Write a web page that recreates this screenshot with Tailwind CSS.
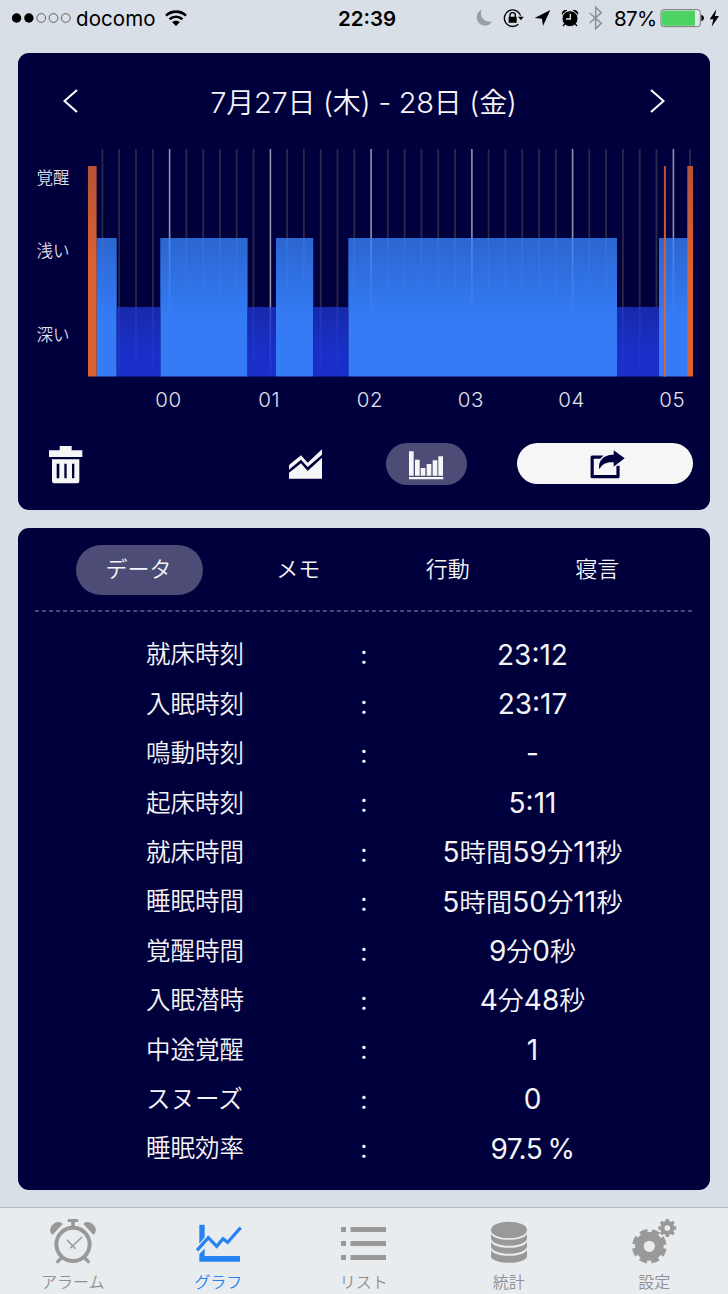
<!DOCTYPE html>
<html lang="ja">
<head>
<meta charset="utf-8">
<title>グラフ</title>
<script src="https://cdn.jsdelivr.net/npm/@tailwindcss/browser@4"></script>
</head>
<body class="w-[728px] h-[1294px] overflow-hidden bg-[#d9dfe6] font-['Inter','Noto_Sans_CJK_JP',sans-serif] flex flex-col">

<!-- Status bar -->
<header class="relative h-[53px] shrink-0 flex items-start text-black">
  <div class="flex items-center h-[37px] pl-[12px]">
    <svg class="-mt-[1px] w-[60px] h-[10px]" viewBox="0 0 60 10"><g fill="#000"><circle cx="4.6" cy="5" r="4.7"/><circle cx="16.9" cy="5" r="4.7"/></g><g fill="none" stroke="#444" stroke-width=".8"><circle cx="29.2" cy="5" r="4.4"/><circle cx="41.5" cy="5" r="4.4"/><circle cx="53.8" cy="5" r="4.4"/></g></svg>
    <span class="ml-[4px] mt-[2px] w-[80px] text-[20.5px] tracking-[0.1px] whitespace-nowrap">docomo</span>
    <svg class="ml-[9px] -mt-[1px] w-[22px] h-[17px]" viewBox="0 0 22 17"><g fill="none" stroke="#000" stroke-width="2.6"><path d="M1 5.6C6.500 .3 15.500 .3 21 5.600"/><path d="M4.600 9.300C8.200 5.900 13.800 5.900 17.400 9.300"/></g><path d="M7.200 12.200C9.400 10.300 12.600 10.300 14.800 12.200L11 16Z"/></svg>
  </div>
  <div class="absolute left-[338px] top-px h-[37px] flex items-center text-[20.5px] font-semibold">22:39</div>
  <svg class="absolute left-[460px] top-0 w-[268px] h-[40px]" viewBox="0 0 804 120">
    <path d="M65 29A25 25 0 1 0 97 64A26 26 0 0 1 65 29Z" fill="#999ea3"/>
    <g fill="none" stroke="#000" stroke-width="4"><path d="M175 73A25 25 0 1 1 182 47"/><path d="M150 52V46a8 8 0 0 1 16 0v6"/></g>
    <path d="M146 50h24v18h-24zM174 50h17l-8 11z"/>
    <path d="M271 30L224 54L246 56L249 78Z"/>
    <path d="M307 43q-2-12 13-12zM353 43q2-12-13-12z" stroke="#000" stroke-width="3"/><circle cx="330" cy="56" r="24" stroke="#d9dfe6" stroke-width="3"/><path d="M331 41v16h-13" fill="none" stroke="#d9dfe6" stroke-width="4"/><path d="M315 71l-6 7M345 71l6 7" stroke="#000" stroke-width="4"/>
    <path d="M389 39L424 70L407 86V22L424 38L389 69" fill="none" stroke="#8c9196" stroke-width="4.500"/>
    <rect x="603" y="29" width="118" height="51" rx="8" fill="#e3e8ec" stroke="#5a6064" stroke-width="2.500"/><path d="M612 32h93v45h-93a6 6 0 0 1-6-6V38a6 6 0 0 1 6-6z" fill="#4cd263"/>
    <path d="M724 44q8 2 8 10t-8 10z"/><path d="M769 28L749 58H760L755 80L777 48H765Z"/>
  </svg>
  <div class="absolute left-[614px] top-px h-[37px] flex items-center text-[20.5px] tracking-[-0.6px]">87%</div>
</header>

<main class="flex flex-col gap-[17.500px] pl-[18px] pr-[18px]">
  <!-- Sleep graph -->
  <section class="h-[457px] rounded-[11px] bg-[#00003d] text-[#f4f4f6] flex flex-col">
    <div class="h-[96px] flex items-center justify-between pl-[45px] pr-[45px]">
      <svg class="w-[15px] h-[24px]" viewBox="0 0 15 24"><path d="M14 1L1.500 12L14 23" fill="none" stroke="#fff" stroke-width="2"/></svg>
      <h1 class="mt-[2px] -ml-[1px] text-[29px] font-[350] whitespace-nowrap leading-none tracking-[-0.3px]">7<span class="text-[28px]">月</span>27<span class="text-[28px]">日</span> (<span class="text-[28px]">木</span>) - 28<span class="text-[28px]">日</span> (<span class="text-[28px]">金</span>)</h1>
      <svg class="w-[15px] h-[24px]" viewBox="0 0 15 24"><path d="M1 1L13.500 12L1 23" fill="none" stroke="#fff" stroke-width="2"/></svg>
    </div>
    <div class="flex h-[228px]">
      <div class="w-[70px] flex flex-col pl-[18.500px] text-[16.500px] font-[350] leading-[24px] text-[#dcdce6]">
        <span class="mt-[17px]">覚醒</span><span class="mt-[49px]">浅い</span><span class="mt-[60px]">深い</span>
      </div>
      <svg class="w-[606px] h-[228px]" viewBox="88 149 606 228">
        <defs>
          <linearGradient id="light" gradientUnits="userSpaceOnUse" x1="0" x2="0" y1="238" y2="318"><stop offset="0" stop-color="#2b66d0"/><stop offset="1" stop-color="#347bf5"/></linearGradient>
          <linearGradient id="deep" gradientUnits="userSpaceOnUse" x1="0" x2="0" y1="307" y2="352"><stop offset="0" stop-color="#1729ab"/><stop offset="1" stop-color="#1a2fc9"/></linearGradient>
          <linearGradient id="wake" gradientUnits="userSpaceOnUse" x1="0" x2="0" y1="166" y2="270"><stop offset="0" stop-color="#b65336"/><stop offset="1" stop-color="#dc6233"/></linearGradient>
          <linearGradient id="fade" gradientUnits="userSpaceOnUse" x1="0" x2="0" y1="238" y2="322"><stop offset="0" stop-color="#7fa8ff" stop-opacity=".5"/><stop offset="1" stop-color="#7fa8ff" stop-opacity="0"/></linearGradient>
        </defs>
        <path stroke="#29294a" stroke-width="1.800" d="M102.400 149V370M119.200 149V370M136 149V370M152.800 149V370M186.400 149V370M203.200 149V370M220 149V370M236.700 149V370M253.500 149V370M287.100 149V370M303.900 149V370M320.700 149V370M337.500 149V370M354.300 149V370M387.800 149V370M404.600 149V370M421.400 149V370M438.200 149V370M455 149V370M488.600 149V370M505.400 149V370M522.200 149V370M539 149V370M555.800 149V370M589.300 149V370M606.100 149V370M622.900 149V370M639.700 149V370M656.500 149V370M690.100 149V370"/>
        <path d="M169.600 149V370M270.400 149V370M371.100 149V370M471.900 149V370M572.600 149V370M673.400 149V370" stroke="#9292ae" stroke-width="1.600"/>
        <path d="M96.500 238H116.700V376.500H96.500zM160.300 238H247.600V376.500H160.300zM276 238H313.200V376.500H276zM348.300 238H617V376.500H348.300zM659 238H688V376.500H659z" fill="url(#light)"/>
        <path d="M116.700 307H160.300V376.500H116.700zM247.600 307H276V376.500H247.600zM313.200 307H348.300V376.500H313.200zM617 307H659V376.500H617z" fill="url(#deep)"/>
        <g fill="url(#fade)"><path d="M168.800 238h1.600v84h-1.600zM370.300 238h1.600v84h-1.600zM471.100 238h1.600v84h-1.600zM571.800 238h1.600v84h-1.600zM672.600 238h1.600v84h-1.600z"/><path opacity=".25" d="M101.500 238h1.800v84h-1.800zM185.500 238h1.800v84h-1.800zM202.300 238h1.800v84h-1.800zM219.100 238h1.800v84h-1.800zM235.800 238h1.800v84h-1.800zM286.200 238h1.800v84h-1.800zM303 238h1.800v84h-1.800zM353.400 238h1.800v84h-1.800zM386.900 238h1.800v84h-1.800zM403.700 238h1.800v84h-1.800zM420.500 238h1.800v84h-1.800zM437.300 238h1.800v84h-1.800zM454.100 238h1.800v84h-1.800zM487.700 238h1.800v84h-1.800zM504.500 238h1.800v84h-1.800zM521.300 238h1.800v84h-1.800zM538.100 238h1.800v84h-1.800zM554.900 238h1.800v84h-1.800zM588.400 238h1.800v84h-1.800zM605.200 238h1.800v84h-1.800z"/>
        <path transform="translate(0 69)" opacity=".6" d="M269.600 238h1.600v69h-1.600z"/><path transform="translate(0 69)" opacity=".2" d="M118.300 238h1.800v69h-1.800zM135.100 238h1.800v69h-1.800zM151.900 238h1.800v69h-1.800zM252.600 238h1.800v69h-1.800zM319.800 238h1.800v69h-1.800zM336.600 238h1.800v69h-1.800zM622 238h1.800v69h-1.800zM638.800 238h1.800v69h-1.800z"/></g>
        <path d="M88 166H96.600V376.500H88zM663.900 166H665.900V376.500H663.900zM687.300 166H693V376.500H687.300z" fill="url(#wake)"/>
      </svg>
    </div>
    <div class="flex pl-[100px] pt-px h-[46px] items-center text-[20.5px] text-[#e0e0e8] tracking-[0.6px] font-[350]">
      <span class="w-[100.800px] shrink-0 text-center">00</span><span class="w-[100.800px] shrink-0 text-center">01</span><span class="w-[100.800px] shrink-0 text-center">02</span><span class="w-[100.800px] shrink-0 text-center">03</span><span class="w-[100.800px] shrink-0 text-center">04</span><span class="w-[100.800px] shrink-0 text-center">05</span>
    </div>
    <div class="flex items-center h-[82px] pl-[30.500px]">
      <svg class="mt-px w-[34px] h-[38px]" viewBox="85 46 102 114" fill="#f6f6f7"><path d="M117 46h36v13h32v20H85V59h32z"/><path fill-rule="evenodd" d="M94 86h82v64q0 8-8 8h-66q-8 0-8-8zM108 99v44h8V99zM131 99v44h7V99zM154 99v44h7V99z"/></svg>
      <svg class="ml-[206.500px] w-[34px] h-[30px]" viewBox="807 56 102 90" fill="#f6f6f7"><path d="M807 104L843 75L863 97L906 57V73L863 110L843 88L807 118zM807 127L843 99L863 122L906 82V145H807z"/></svg>
      <div class="ml-[63px] w-[81px] h-[42px] rounded-full bg-[#4c4c77] flex items-center justify-center">
        <svg class="mt-[2px] w-[35px] h-[29px]" viewBox="118 63 105 87" fill="#f6f6f7"><path d="M118 64h14v73h-14zM136 89h14v48h-14zM153 114h14v23h-14zM171 102h14v35h-14zM189 91h14v46h-14zM206 79h14v58h-14zM118 141h103v7H118z"/></svg>
      </div>
      <div class="ml-[50px] -mt-px w-[176px] h-[41px] rounded-full bg-[#f6f6f7] flex items-center justify-center">
        <svg class="ml-[5px] mt-px w-[36px] h-[29px]" viewBox="662 59 108 87"><path d="M702 80.500H668.500V139H746V106" fill="none" stroke="#00003d" stroke-width="9.500" stroke-linejoin="round"/><path d="M733 60L766 84L733 109V96C714 94 700 99 690 117C685 93 702 72 733 73Z" fill="none" stroke="#f6f6f7" stroke-width="8"/><path d="M733 60L766 84L733 109V96C714 94 700 99 690 117C685 93 702 72 733 73Z" fill="#00003d"/></svg>
      </div>
    </div>
  </section>

  <!-- Sleep data -->
  <section class="h-[662.500px] rounded-[11px] bg-[#00003d] text-[#f4f4f6] flex flex-col">
    <nav class="mt-[17px] h-[50px] flex items-center pl-[58px] text-[22px] font-[350]">
      <span class="w-[127px] h-[50px] rounded-full bg-[#4c4c77] flex items-center justify-center pr-[2px]">データ</span>
      <span class="ml-[20.500px] w-[149.500px] text-center">メモ</span><span class="w-[149.500px] text-center">行動</span><span class="w-[149.500px] text-center">寝言</span>
    </nav>
    <svg class="mt-[15.500px] ml-[17px] w-[658px] h-[2px]" viewBox="0 0 658 2"><path d="M0 1H658" stroke="#9494b0" stroke-width="1" stroke-dasharray="4 3.020"/></svg>
    <dl class="mt-[18px] grid grid-cols-[128px_97.500px_239.500px_99px] auto-rows-[49.400px] items-center text-[28px] leading-none">
      <dt class="col-start-2 text-[24.500px] font-[350] whitespace-nowrap">就床時刻</dt><dd class="text-center text-[25px] pt-[2px] pl-px">:</dd><dd class="flex justify-center whitespace-nowrap items-baseline">23:12</dd>
      <dt class="col-start-2 text-[24.500px] font-[350] whitespace-nowrap">入眠時刻</dt><dd class="text-center text-[25px] pt-[2px] pl-px">:</dd><dd class="flex justify-center whitespace-nowrap items-baseline">23:17</dd>
      <dt class="col-start-2 text-[24.500px] font-[350] whitespace-nowrap">鳴動時刻</dt><dd class="text-center text-[25px] pt-[2px] pl-px">:</dd><dd class="flex justify-center whitespace-nowrap items-baseline">-</dd>
      <dt class="col-start-2 text-[24.500px] font-[350] whitespace-nowrap">起床時刻</dt><dd class="text-center text-[25px] pt-[2px] pl-px">:</dd><dd class="flex justify-center whitespace-nowrap items-baseline">5:11</dd>
      <dt class="col-start-2 text-[24.500px] font-[350] whitespace-nowrap">就床時間</dt><dd class="text-center text-[25px] pt-[2px] pl-px">:</dd><dd class="flex justify-center whitespace-nowrap items-baseline">5<span class="text-[26.500px] font-[350]">時間</span>59<span class="text-[26.500px] font-[350]">分</span>11<span class="text-[26.500px] font-[350]">秒</span></dd>
      <dt class="col-start-2 text-[24.500px] font-[350] whitespace-nowrap">睡眠時間</dt><dd class="text-center text-[25px] pt-[2px] pl-px">:</dd><dd class="flex justify-center whitespace-nowrap items-baseline">5<span class="text-[26.500px] font-[350]">時間</span>50<span class="text-[26.500px] font-[350]">分</span>11<span class="text-[26.500px] font-[350]">秒</span></dd>
      <dt class="col-start-2 text-[24.500px] font-[350] whitespace-nowrap">覚醒時間</dt><dd class="text-center text-[25px] pt-[2px] pl-px">:</dd><dd class="flex justify-center whitespace-nowrap items-baseline">9<span class="text-[26px] font-[350]">分</span>0<span class="text-[26px] font-[350]">秒</span></dd>
      <dt class="col-start-2 text-[24.500px] font-[350] whitespace-nowrap">入眠潜時</dt><dd class="text-center text-[25px] pt-[2px] pl-px">:</dd><dd class="flex justify-center whitespace-nowrap items-baseline">4<span class="text-[26px] font-[350]">分</span>48<span class="text-[26px] font-[350]">秒</span></dd>
      <dt class="col-start-2 text-[24.500px] font-[350] whitespace-nowrap">中途覚醒</dt><dd class="text-center text-[25px] pt-[2px] pl-px">:</dd><dd class="flex justify-center whitespace-nowrap items-baseline">1</dd>
      <dt class="col-start-2 text-[24.500px] font-[350] whitespace-nowrap">スヌーズ</dt><dd class="text-center text-[25px] pt-[2px] pl-px">:</dd><dd class="flex justify-center whitespace-nowrap items-baseline">0</dd>
      <dt class="col-start-2 text-[24.500px] font-[350] whitespace-nowrap">睡眠効率</dt><dd class="text-center text-[25px] pt-[2px] pl-px">:</dd><dd class="flex justify-center whitespace-nowrap items-baseline tracking-[-0.5px] [word-spacing:-2px]">97.5 %</dd>
    </dl>
  </section>
</main>

<!-- Tab bar -->
<footer class="mt-[17px] h-[87px] shrink-0 border-t border-[#b3b7bc] bg-[#e9ecef] grid grid-cols-[145.500px_145.500px_145.500px_145.500px_145.500px] text-[16px] font-[350] text-[#8f8f8f]">
  <div class="flex flex-col items-center">
    <svg class="mt-[10px] w-[48px] h-[48px]" viewBox="147 144 144 144"><g fill="none" stroke="#999"><circle cx="219" cy="223" r="50" stroke-width="12"/><path d="M207 151.500H231" stroke-width="9" stroke-linecap="round"/><path d="M219 151V172" stroke-width="11"/><path d="M187 261L173 275M251 261L265 275" stroke-width="10" stroke-linecap="round"/><path d="M201 209L226 236M246 201L211 235" stroke-width="4.500"/></g><path d="M158 194C149 190 148 176 155 168C164 156 177 151 188 162ZM280 194C289 190 290 176 283 168C274 156 261 151 250 162Z" fill="#999"/></svg>
    <span class="leading-[24px] mt-[4px]">アラーム</span>
  </div>
  <div class="flex flex-col items-center text-[#2583f2]">
    <svg class="mt-[10px] ml-[1px] w-[48px] h-[48px]" viewBox="585 144 144 144"><path d="M598 164H614V202L598 221ZM598 252L614 236V258H720V275H598Z" fill="#2583f2"/><path d="M591 241L625 203L650 229L669 206L683 217L722 173" fill="none" stroke="#2583f2" stroke-width="9.500"/></svg>
    <span class="leading-[24px] mt-[4px]">グラフ</span>
  </div>
  <div class="flex flex-col items-center">
    <svg class="mt-[10px] w-[48px] h-[48px]" viewBox="340 1218 48 48" fill="#999"><path d="M341 1227h5v5h-5zM350.500 1227H386v5H350.500zM341 1241h5v5h-5zM350.500 1241H386v5H350.500zM341 1255h5v5h-5zM350.500 1255H386v5H350.500z"/></svg>
    <span class="leading-[24px] mt-[4px]">リスト</span>
  </div>
  <div class="flex flex-col items-center">
    <svg class="mt-[10px] -ml-[1px] w-[48px] h-[48px]" viewBox="362 144 144 144" fill="#999"><ellipse cx="434" cy="180" rx="54" ry="25"/><path d="M380 192C389 215 479 215 488 192V207C479 234 389 234 380 207ZM380 216C389 239 479 239 488 216V231C479 258 389 258 380 231ZM380 240C389 263 479 263 488 240V260C479 284 389 284 380 260Z"/></svg>
    <span class="leading-[24px] mt-[4px] -ml-[1px]">統計</span>
  </div>
  <div class="flex flex-col items-center">
    <svg class="mt-[10px] -ml-[1px] w-[48px] h-[48px]" viewBox="799 144 144 144" fill="none" stroke="#999"><circle cx="857" cy="229" r="30" stroke-width="26"/><circle cx="857" cy="229" r="46" stroke-width="12" pathLength="80" stroke-dasharray="6.400 3.600" transform="rotate(8.100 857 229)"/><circle cx="911" cy="174" r="15" stroke-width="13"/><circle cx="911" cy="174" r="23" stroke-width="8" pathLength="80" stroke-dasharray="5.600 4.400" transform="rotate(-12.600 911 174)"/></svg>
    <span class="leading-[24px] mt-[4px] -ml-[1px]">設定</span>
  </div>
</footer>
</body>
</html>
